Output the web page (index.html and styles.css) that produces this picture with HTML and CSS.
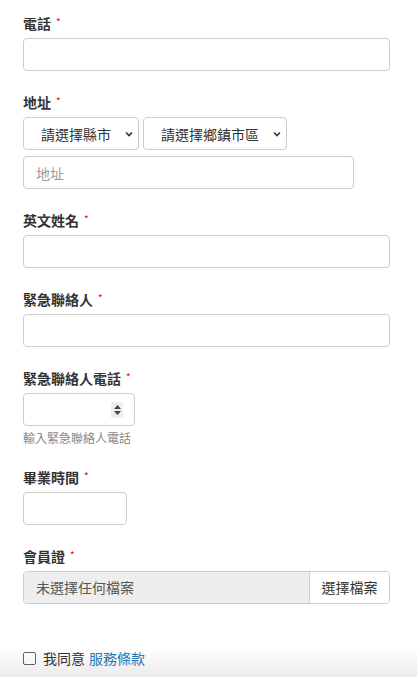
FILE: index.html
```html
<!DOCTYPE html>
<html lang="zh-Hant">
<head>
    <meta charset="UTF-8">
    <meta name="viewport" content="width=device-width, initial-scale=1.0">
    <title>會員資料</title>
    <link rel="stylesheet" href="styles.css">
</head>
<body>

    <div class="container">
        <form id="memberForm">

            <div class="form-group">
                <label class="form-label">電話 <span class="req">*</span></label>
                <input type="text" class="form-control">
            </div>

            <div class="form-group">
                <label class="form-label">地址 <span class="req">*</span></label>
                <div class="select-row">
                    <div class="select-wrap city">
                        <select class="form-select">
                            <option>請選擇縣市</option>
                        </select>
                        <svg class="chevron" width="8" height="6" viewBox="0 0 8 6"><path d="M1 1.5 L4 4.5 L7 1.5" fill="none" stroke="#333" stroke-width="1.6"/></svg>
                    </div>
                    <div class="select-wrap town">
                        <select class="form-select">
                            <option>請選擇鄉鎮市區</option>
                        </select>
                        <svg class="chevron" width="8" height="6" viewBox="0 0 8 6"><path d="M1 1.5 L4 4.5 L7 1.5" fill="none" stroke="#333" stroke-width="1.6"/></svg>
                    </div>
                </div>
                <input type="text" class="form-control address" placeholder="地址">
            </div>

            <div class="form-group">
                <label class="form-label">英文姓名 <span class="req">*</span></label>
                <input type="text" class="form-control">
            </div>

            <div class="form-group">
                <label class="form-label">緊急聯絡人 <span class="req">*</span></label>
                <input type="text" class="form-control">
            </div>

            <div class="form-group">
                <label class="form-label">緊急聯絡人電話 <span class="req">*</span></label>
                <div class="number-box">
                    <input type="text" class="number-input">
                    <span class="spinner">
                        <svg width="9" height="12" viewBox="0 0 9 12"><path d="M4.5 1 L8 5 L1 5 Z M1 7 L8 7 L4.5 11 Z" fill="#444"/></svg>
                    </span>
                </div>
                <p class="help-text">輸入緊急聯絡人電話</p>
            </div>

            <div class="form-group">
                <label class="form-label">畢業時間 <span class="req">*</span></label>
                <input type="text" class="form-control date">
            </div>

            <div class="form-group">
                <label class="form-label">會員證 <span class="req">*</span></label>
                <div class="file-box">
                    <span class="file-name">未選擇任何檔案</span>
                    <span class="file-btn">選擇檔案</span>
                </div>
            </div>

            <div class="agree">
                <span class="checkbox"></span>
                <span>我同意</span>
                <a href="#" class="terms">服務條款</a>
            </div>

        </form>
    </div>

    <div class="bottom-fade"></div>

</body>
</html>
```

FILE: styles.css
```css
* {
    margin: 0;
    padding: 0;
    box-sizing: border-box;
}

body {
    font-family: 'Noto Sans CJK TC', 'Noto Sans', sans-serif;
    background: #fff;
    color: #333;
}

.container {
    padding: 13px 27px 40px 23px;
}

.form-group {
    margin-bottom: 21px;
}

.form-label {
    display: flex;
    align-items: center;
    height: 20px;
    font-size: 14px;
    font-weight: bold;
    color: #333;
    margin-bottom: 5px;
}

.req {
    color: #e00;
    font-size: 10px;
    line-height: 10px;
    font-weight: normal;
    margin-left: 5px;
    margin-top: -3px;
}

.form-control {
    display: block;
    width: 100%;
    height: 33px;
    padding: 6px 12px;
    border: 1px solid #ccc;
    border-radius: 4px;
    font-family: inherit;
    font-size: 14px;
    color: #333;
    background: #fff;
}

.form-control::placeholder {
    color: #999;
}

.form-control.address {
    width: 331px;
    margin-top: 6px;
}

.form-control.date {
    width: 104px;
}

.select-row {
    display: flex;
    gap: 4px;
}

.select-wrap {
    position: relative;
}

.select-wrap.city {
    width: 116px;
}

.select-wrap.town {
    width: 144px;
}

.form-select {
    appearance: none;
    -webkit-appearance: none;
    width: 100%;
    height: 33px;
    padding: 0 0 0 17px;
    border: 1px solid #ccc;
    border-radius: 4px;
    background: #fff;
    font-family: inherit;
    font-size: 14px;
    color: #333;
}

.chevron {
    position: absolute;
    right: 6px;
    top: 14px;
}

.number-box {
    display: flex;
    align-items: center;
    width: 112px;
    height: 33px;
    border: 1px solid #ccc;
    border-radius: 4px;
    padding-right: 11px;
}

.number-input {
    flex: 1;
    min-width: 0;
    border: none;
    outline: none;
    height: 100%;
    background: transparent;
}

.spinner {
    display: flex;
    align-items: center;
    justify-content: center;
    width: 12px;
    height: 16px;
    background: #eee;
}

.help-text {
    font-size: 12px;
    line-height: 16px;
    color: #888;
    margin-top: 4px;
}

.file-box {
    display: flex;
    height: 33px;
    border: 1px solid #ccc;
    border-radius: 4px;
    overflow: hidden;
    font-size: 14px;
}

.file-name {
    flex: 1;
    background: #eee;
    color: #555;
    padding-left: 12px;
    line-height: 31px;
}

.file-btn {
    background: #fff;
    border-left: 1px solid #ccc;
    color: #333;
    width: 80px;
    text-align: center;
    line-height: 31px;
}

.agree {
    display: flex;
    align-items: center;
    height: 20px;
    margin-top: 44px;
    font-size: 14px;
    color: #333;
}

.checkbox {
    width: 13px;
    height: 13px;
    border: 1px solid #666;
    border-radius: 2px;
    margin-right: 7px;
}

.terms {
    color: #2a7ab9;
    text-decoration: none;
    margin-left: 4px;
}

.bottom-fade {
    position: fixed;
    left: 0;
    right: 0;
    bottom: 0;
    height: 30px;
    background: linear-gradient(to bottom, rgba(0, 0, 0, 0), rgba(0, 0, 0, 0.08));
    pointer-events: none;
}
```
